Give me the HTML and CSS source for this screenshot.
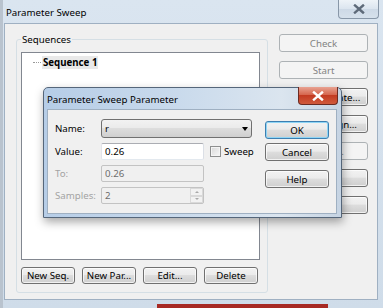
FILE: index.html
```html
<!DOCTYPE html>
<html lang="en">
<head>
    <meta charset="UTF-8">
    <meta name="viewport" content="width=device-width, initial-scale=1.0">
    <title>Parameter Sweep</title>
    <link rel="stylesheet" href="styles.css">
</head>
<body>

<div class="win">
    <div class="titlebar">
        <span class="title">Parameter Sweep</span>
        <span class="cap-close">
            <svg width="12" height="10" viewBox="0 0 12 10"><path d="M2 1.5 L10 8.5 M10 1.5 L2 8.5" stroke="#5e6a79" stroke-width="2.4" stroke-linecap="square"/></svg>
        </span>
    </div>
    <div class="client">
        <fieldset class="group">
            <legend>Sequences</legend>
            <div class="tree">
                <div class="node"><span class="dots"></span><span class="node-label">Sequence 1</span></div>
            </div>
            <div class="seq-buttons">
                <button class="btn">New Seq.</button>
                <button class="btn">New Par...</button>
                <button class="btn">Edit...</button>
                <button class="btn">Delete</button>
            </div>
        </fieldset>
        <div class="side">
            <button class="btn" disabled>Check</button>
            <button class="btn" disabled>Start</button>
            <button class="btn">Save Template...</button>
            <button class="btn">Open Design...</button>
            <button class="btn" disabled>Results...</button>
            <button class="btn">Close</button>
            <button class="btn">Help</button>
        </div>
    </div>
</div>

<!-- modal dialog sits over the main window -->
<div class="dlg">
    <div class="dlg-title">
        <span class="title">Parameter Sweep Parameter</span>
        <span class="dlg-close">
            <svg width="12" height="10" viewBox="0 0 12 10"><path d="M2 1.5 L10 8.5 M10 1.5 L2 8.5" stroke="#ffffff" stroke-width="2.4" stroke-linecap="square"/></svg>
        </span>
    </div>
    <div class="dlg-client">
        <div class="form">
            <label>Name:</label>
            <div class="combo"><span>r</span><span class="arrow"></span></div>

            <label>Value:</label>
            <div class="value-row">
                <input class="field" value="0.26">
                <label class="check"><span class="box"></span>Sweep</label>
            </div>

            <label class="off">To:</label>
            <input class="field" value="0.26" disabled>

            <label class="off">Samples:</label>
            <div class="spin">
                <span class="spin-val">2</span>
                <span class="spin-btns">
                    <span class="spin-up"></span>
                    <span class="spin-down"></span>
                </span>
            </div>
        </div>
        <div class="dlg-buttons">
            <button class="btn default">OK</button>
            <button class="btn">Cancel</button>
            <button class="btn help">Help</button>
        </div>
    </div>
</div>

</body>
</html>
```

FILE: styles.css
```css
body { margin: 0; font-family: "Noto Sans", "Open Sans", sans-serif; font-size: 9.7px; color: #000; background: #c9d6e3; }

/* main window, glass frame */
.win {
    width: 383px; height: 308px; box-sizing: border-box;
    padding: 0 5px 8px 4px;
    display: flex; flex-direction: column;
    background:
        linear-gradient(#a72a24, #a72a24) 157px 304px / 171px 4px no-repeat,
        linear-gradient(90deg, #b9c3ce 0, #b9c3ce 3px, transparent 3px),
        linear-gradient(#dae5f0, #cfdce9);
}
.titlebar { height: 23px; display: flex; align-items: flex-start; }
.titlebar .title { padding-left: 2px; line-height: 25px; }
.cap-close {
    margin-left: auto; margin-right: -1px;
    width: 41px; height: 19px; box-sizing: border-box;
    border: 1px solid #8897a8; border-top: none; border-radius: 0 0 4px 4px;
    background: linear-gradient(#eef3f8, #dbe5ef 50%, #cdd9e6 50%, #d6e1ec);
    display: flex; align-items: center; justify-content: center;
}
.client {
    flex: 1; display: flex;
    background: #f0f0f0;
    border: 1px solid #9fb0c2;
    padding-left: 11px;
}

/* group box */
.group {
    margin: 8px 0 0 0; padding: 0 7px 8px 4px;
    width: 252px; box-sizing: border-box; min-width: 0;
    border: 1px solid #d5dfe5; border-radius: 3px;
    align-self: flex-start;
}
.group legend { padding: 0 1px; line-height: 15px; }
.tree { height: 208px; box-sizing: border-box; margin-top: 5px; border: 1px solid #828790; background: #fff; }
.node { display: flex; align-items: center; padding-top: 3px; }
.dots { width: 8px; margin-left: 11px; border-top: 1px dotted #9a9a9a; }
.node-label { margin-left: 1px; padding: 0 1px; line-height: 13px; font-weight: bold; background: #e9e9e9; }
.seq-buttons { display: flex; gap: 7px; margin-top: 7px; }
.seq-buttons .btn { width: 54px; height: 17px; }

.side { margin: 10px 0 0 11px; width: 89px; display: flex; flex-direction: column; gap: 9px; }
.side .btn { height: 18px; }

/* win7 push button */
.btn {
    box-sizing: border-box; padding: 0;
    font-family: inherit; font-size: inherit; color: #000;
    border: 1px solid #707070; border-radius: 3px;
    background: linear-gradient(#f2f2f2, #ebebeb 45%, #dddddd 50%, #cfcfcf);
    box-shadow: inset 0 0 0 1px rgba(255, 255, 255, 0.7);
    white-space: nowrap; overflow: hidden;
}
.btn:disabled { border-color: #adb2b5; background: #f4f4f4; color: #838383; box-shadow: none; }
.btn.default { border-color: #3c7fb1; box-shadow: inset 0 0 0 1px #8fd5f5; }

/* dialog */
.dlg {
    position: absolute; left: 43px; top: 87px;
    width: 299px; height: 131px; box-sizing: border-box;
    display: flex; flex-direction: column;
    padding: 0 4px 3px 3px;
    border: 1px solid #55667a; border-radius: 5px 5px 0 0;
    background: linear-gradient(90deg, #b6cde7, #c9daec 45%, #dbe5ef 80%, #c6d4e3);
    box-shadow: 1px 4px 10px rgba(0, 0, 0, 0.35);
}
.dlg-title { height: 21px; display: flex; align-items: flex-start; }
.dlg-title .title { line-height: 23px; }
.dlg-close {
    margin: -1px -1px 0 auto;
    width: 40px; height: 18px; box-sizing: border-box;
    border: 1px solid #6b2b22; border-top: none; border-radius: 0 0 4px 4px;
    background: linear-gradient(#e8a291, #d6674f 45%, #c33b22 50%, #d05a3c);
    display: flex; align-items: center; justify-content: center;
}
.dlg-client { flex: 1; display: flex; background: #f0f0f0; border: 1px solid #9fb0c2; }

.form {
    padding: 9px 0 0 7px; width: 204px; box-sizing: border-box;
    display: grid; grid-template-columns: 46px 151px; row-gap: 5px;
    align-items: center; align-content: start;
}
.form label.off { color: #a3a3a3; }

.combo {
    height: 19px; box-sizing: border-box;
    display: flex; align-items: center; justify-content: space-between;
    padding: 0 3px 0 3px;
    border: 1px solid #707070; border-radius: 3px;
    background: linear-gradient(#f2f2f2, #ebebeb 45%, #dddddd 50%, #cfcfcf);
}
.arrow { width: 0; height: 0; border-left: 3.5px solid transparent; border-right: 3.5px solid transparent; border-top: 4px solid #000; }

.field {
    width: 103px; height: 17px; box-sizing: border-box; margin: 0;
    padding: 0 0 0 3px;
    font-family: inherit; font-size: inherit; color: #000;
    border: 1px solid; border-color: #abadb3 #dbdfe6 #e3e9ef #e2e3ea; border-radius: 2px;
    background: #fff; outline: none;
}
.field:disabled { background: #f0f0f0; border-color: #c3c3c3; color: #6d6d6d; }

.value-row { display: flex; align-items: center; }
.check { display: flex; align-items: center; margin-left: 6px; }
.box {
    width: 11px; height: 11px; box-sizing: border-box; margin-right: 3px;
    border: 1px solid #8e8f8f;
    background: linear-gradient(135deg, #d8d8d8, #f8f8f8);
    box-shadow: inset 0 0 0 1px #f4f4f4;
}

.spin {
    width: 103px; height: 17px; box-sizing: border-box;
    display: flex; align-items: center; justify-content: space-between;
    border: 1px solid #c3c3c3; border-radius: 2px; background: #f0f0f0;
}
.spin-val { padding-left: 3px; color: #6d6d6d; }
.spin-btns { display: flex; flex-direction: column; width: 13px; height: 15px; }
.spin-up, .spin-down {
    flex: 1; display: flex; align-items: center; justify-content: center;
    border: 1px solid #d9d9d9; background: #f2f2f2;
}
.spin-up::after { content: ""; border-left: 2px solid transparent; border-right: 2px solid transparent; border-bottom: 2px solid #a9a9a9; }
.spin-down::after { content: ""; border-left: 2px solid transparent; border-right: 2px solid transparent; border-top: 2px solid #a9a9a9; }

.dlg-buttons { margin-left: 13px; padding-top: 11px; width: 64px; display: flex; flex-direction: column; gap: 4px; }
.dlg-buttons .btn { height: 18px; }
.dlg-buttons .help { margin-top: 5px; }
```
